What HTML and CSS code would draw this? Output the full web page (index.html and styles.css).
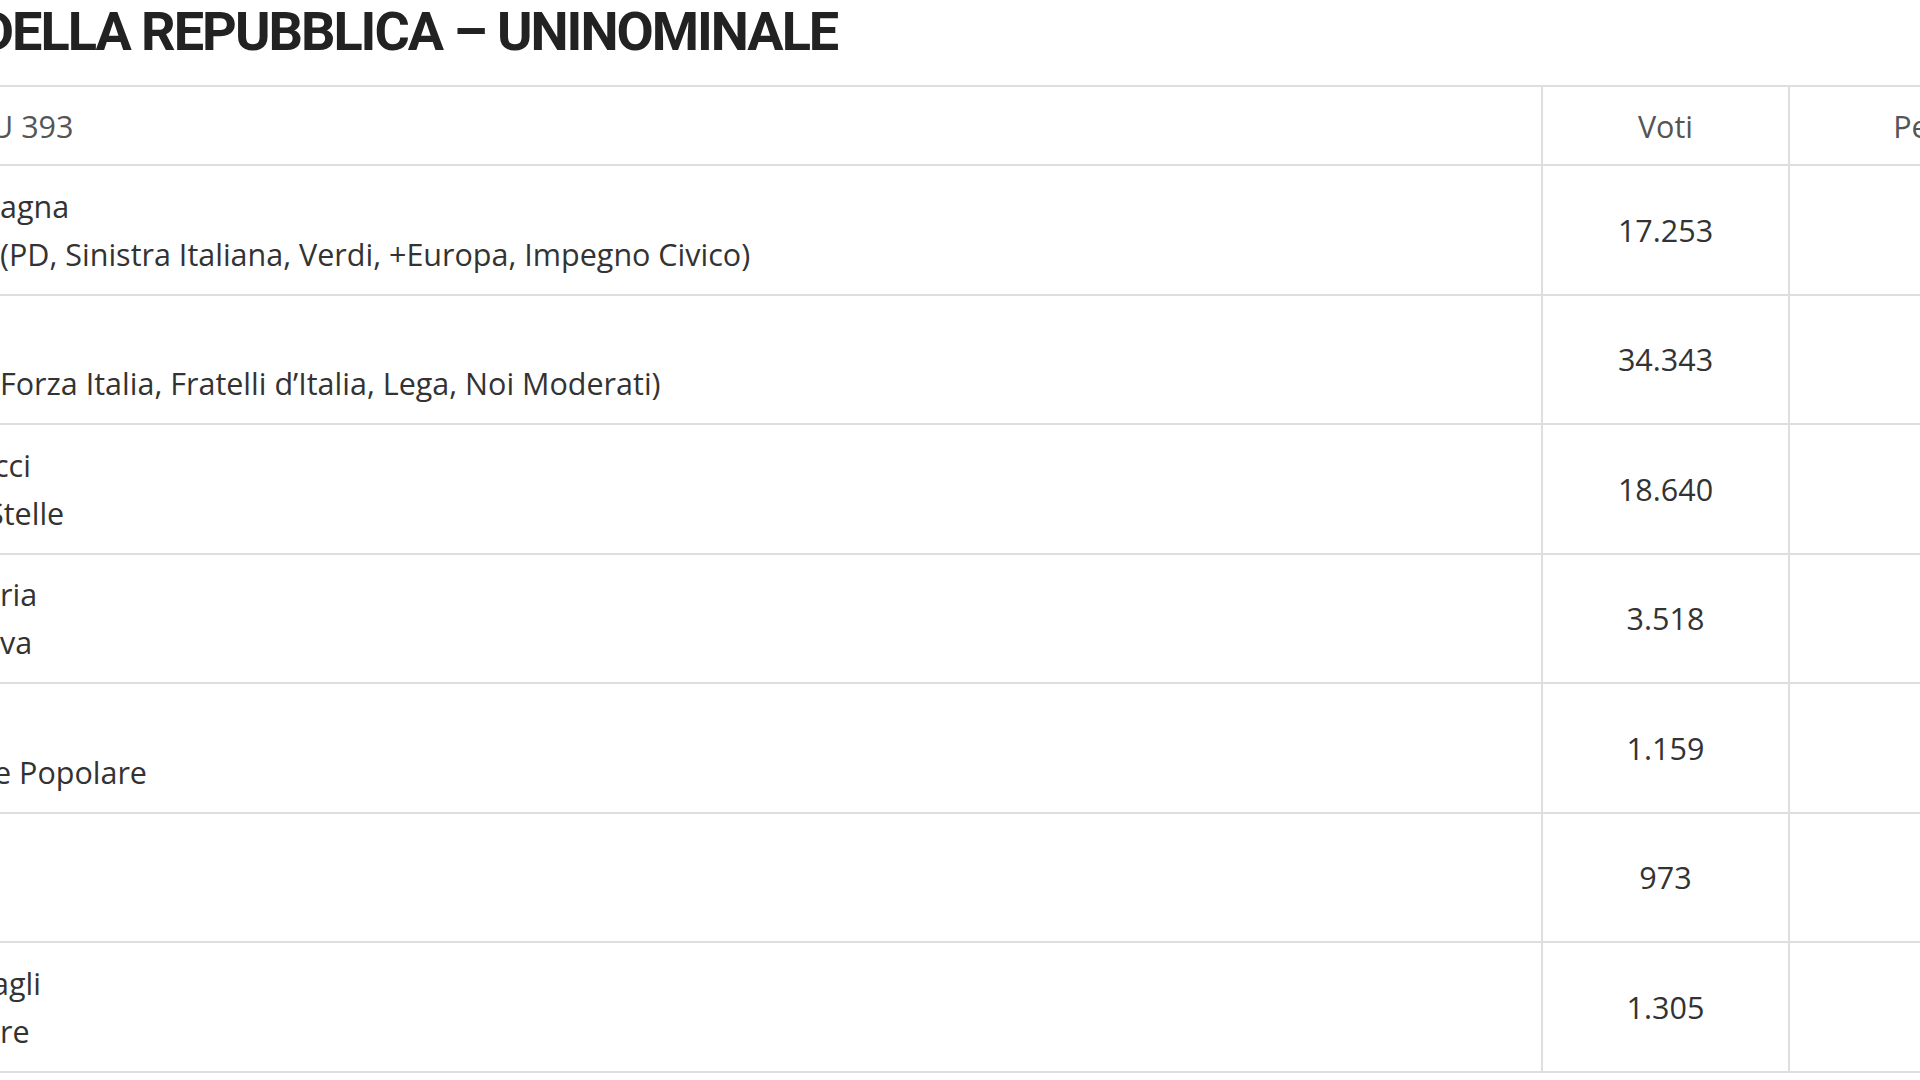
FILE: index.html
```html
<!DOCTYPE html>
<html lang="it">
<head>
<meta charset="utf-8">
<title>Senato della Repubblica – Uninominale</title>
<link rel="stylesheet" href="styles.css">
</head>
<body>
<main class="page">
  <h1 class="title">DELLA REPUBBLICA – UNINOMINALE</h1>
  <table class="results">
    <thead>
      <tr>
        <th class="c-name">U 393</th>
        <th class="c-votes">Voti</th>
        <th class="c-pct">Percentuale</th>
      </tr>
    </thead>
    <tbody>
      <tr>
        <td class="c-name"><span class="line">agna</span><span class="line">(PD, Sinistra Italiana, Verdi, +Europa, Impegno Civico)</span></td>
        <td class="c-votes">17.253</td>
        <td class="c-pct">22,35%</td>
      </tr>
      <tr>
        <td class="c-name"><span class="line">&nbsp;</span><span class="line">Forza Italia, Fratelli d’Italia, Lega, Noi Moderati)</span></td>
        <td class="c-votes">34.343</td>
        <td class="c-pct">44,49%</td>
      </tr>
      <tr>
        <td class="c-name"><span class="line cut-s">cci</span><span class="line cut-l">Stelle</span></td>
        <td class="c-votes">18.640</td>
        <td class="c-pct">24,15%</td>
      </tr>
      <tr>
        <td class="c-name"><span class="line">ria</span><span class="line">va</span></td>
        <td class="c-votes">3.518</td>
        <td class="c-pct">4,56%</td>
      </tr>
      <tr>
        <td class="c-name"><span class="line">&nbsp;</span><span class="line cut-s">e Popolare</span></td>
        <td class="c-votes">1.159</td>
        <td class="c-pct">1,50%</td>
      </tr>
      <tr>
        <td class="c-name"><span class="line">&nbsp;</span><span class="line">&nbsp;</span></td>
        <td class="c-votes">973</td>
        <td class="c-pct">1,26%</td>
      </tr>
      <tr>
        <td class="c-name"><span class="line cut-m">agli</span><span class="line">re</span></td>
        <td class="c-votes">1.305</td>
        <td class="c-pct">1,69%</td>
      </tr>
    </tbody>
  </table>
</main>
</body>
</html>
```
FILE: styles.css
```css
html, body {
  margin: 0;
  padding: 0;
  background: #ffffff;
  overflow: hidden;
  width: 1920px;
  height: 1080px;
}

.page {
  width: 2250px;
  font-family: "Open Sans", "Liberation Sans", sans-serif;
  color: #333333;
}

.title {
  margin: 0;
  padding: 2px 0 0 0;
  height: 85px;
  box-sizing: border-box;
  font-family: Roboto, "Liberation Sans", sans-serif;
  font-weight: 700;
  font-size: 54px;
  line-height: 60px;
  letter-spacing: -2px;
  color: #222222;
  text-indent: -21px;
  white-space: nowrap;
}

.results {
  border-collapse: collapse;
  table-layout: fixed;
  width: 2164px;
}

.results th,
.results td {
  border-top: 2px solid #dedede;
  border-bottom: 2px solid #dedede;
  padding: 0;
  vertical-align: middle;
}

.results th {
  height: 77px;
  font-weight: 400;
  font-size: 30.5px;
  color: #555555;
}

.results td {
  height: 127.5px;
  font-size: 30.5px;
}

.c-name {
  width: 1541px;
  text-align: left;
}

th.c-name {
  text-indent: -9px;
}

.c-votes {
  width: 245px;
  text-align: center;
  border-left: 2px solid #dedede;
  border-right: 2px solid #dedede;
}

.c-pct {
  width: 376px;
  text-align: center;
}

.line {
  display: block;
  line-height: 48px;
  white-space: nowrap;
}

.cut-s {
  margin-left: -6px;
}

.cut-m {
  margin-left: -8px;
}

.cut-l {
  margin-left: -13px;
}
```
